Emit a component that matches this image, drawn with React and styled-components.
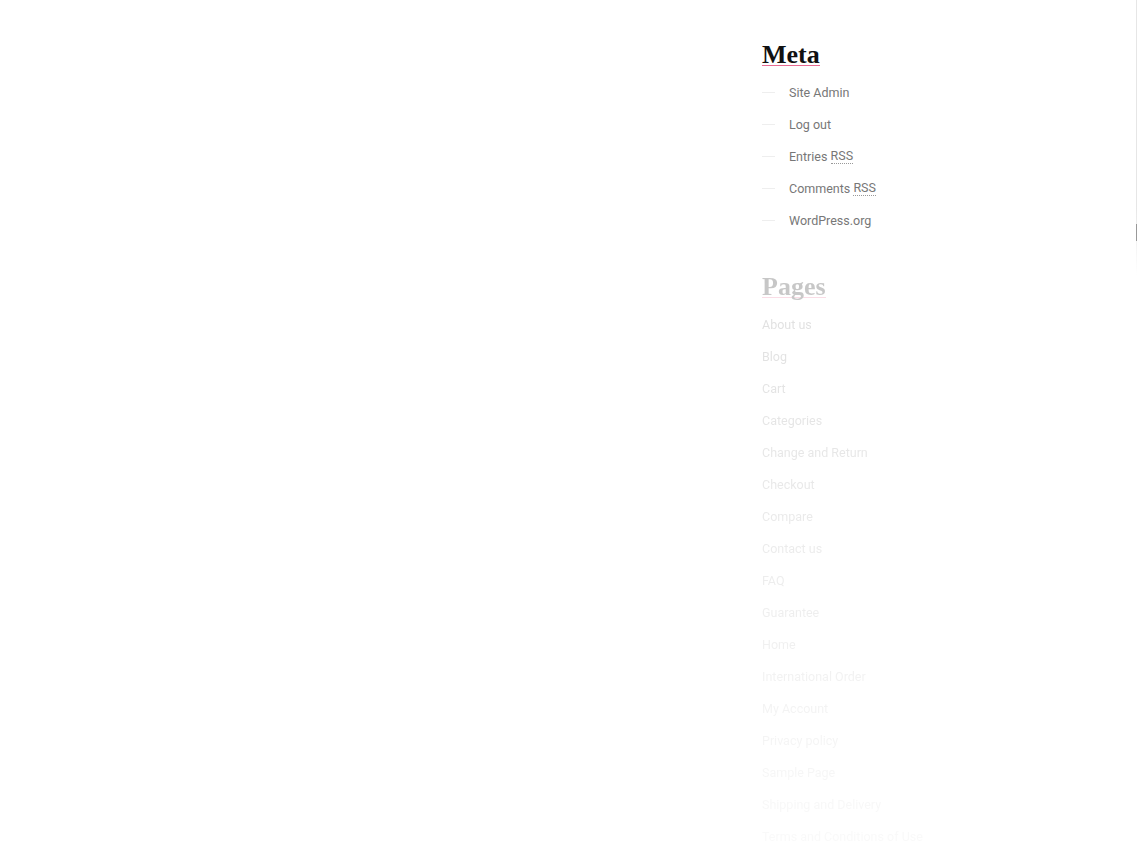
import React from 'react'
import styled, { createGlobalStyle } from 'styled-components'

const Global = createGlobalStyle`
  html, body { margin: 0; padding: 0; background: #fff; }
  body { font-family: Roboto, "Liberation Sans", sans-serif; }
`

const Page = styled.div`
  display: flex;
  height: 858px;
  position: relative;
  overflow: hidden;
`

const Main = styled.div`
  flex: 1;
`

const Sidebar = styled.aside`
  width: 375px;
  padding-top: 45px;
  box-sizing: border-box;
`

const Widget = styled.section`
  margin-bottom: 41px;
  ${p => p.$faded && `
    -webkit-mask-image: linear-gradient(to bottom, rgba(0,0,0,0.24) 0px, rgba(0,0,0,0.04) 570px);
    mask-image: linear-gradient(to bottom, rgba(0,0,0,0.24) 0px, rgba(0,0,0,0.04) 570px);
  `}
`

const Title = styled.h2`
  display: inline-block;
  margin: 0 0 10px;
  font-family: "Liberation Serif", serif;
  font-weight: 700;
  font-size: 26px;
  line-height: 20px;
  color: #111;
  border-bottom: 1px solid #e86a92;
`

const List = styled.ul`
  list-style: none;
  margin: 0;
  padding: 0;
`

const Item = styled.li`
  display: flex;
  align-items: center;
  white-space: pre;
  height: 32px;
  font-size: 12.5px;
  color: #777;

  ${p => p.$dash && `
    &::before {
      content: '';
      width: 13px;
      height: 1px;
      background: #eee;
      margin-right: 14px;
    }
  `}
`

const Abbr = styled.abbr`
  text-decoration: none;
  border-bottom: 1px dotted #999;
`

const Scroll = styled.div`
  position: absolute;
  top: 0;
  right: 0;
  width: 1px;
  height: 275px;
  background: linear-gradient(to bottom, #e6e6e6 75%, rgba(230,230,230,0));

  &::after {
    content: '';
    position: absolute;
    top: 224px;
    left: 0;
    width: 1px;
    height: 17px;
    background: #999;
  }
`

const meta = [
  ['Site Admin'],
  ['Log out'],
  ['Entries', 'RSS'],
  ['Comments', 'RSS'],
  ['WordPress.org'],
]

const pages = [
  'About us', 'Blog', 'Cart', 'Categories', 'Change and Return', 'Checkout',
  'Compare', 'Contact us', 'FAQ', 'Guarantee', 'Home', 'International Order',
  'My Account', 'Privacy policy', 'Sample Page', 'Shipping and Delivery',
  'Terms and Conditions of Use',
]

export default function App() {
  return (
    <>
      <Global />
      <Page>
        <Main />
        <Sidebar>
          <Widget>
            <Title>Meta</Title>
            <List>
              {meta.map(([text, abbr]) => (
                <Item key={text} $dash>
                  {abbr ? text + ' ' : text}
                  {abbr && <Abbr title="Really Simple Syndication">{abbr}</Abbr>}
                </Item>
              ))}
            </List>
          </Widget>
          <Widget $faded>
            <Title>Pages</Title>
            <List>
              {pages.map(p => <Item key={p}>{p}</Item>)}
            </List>
          </Widget>
        </Sidebar>
        <Scroll />
      </Page>
    </>
  )
}
